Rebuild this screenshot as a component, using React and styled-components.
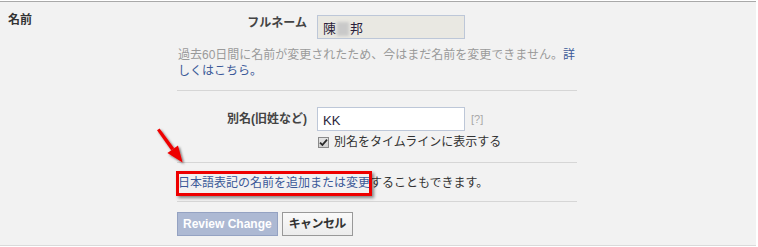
import React from "react";
import styled, { createGlobalStyle } from "styled-components";

const Global = createGlobalStyle`
  html, body { margin: 0; padding: 0; background: #ffffff; }
  * { box-sizing: border-box; }
`;

const Panel = styled.section`
  margin-top: 1px;
  width: 756px;
  height: 245px;
  background: #f2f2f2;
  border-top: 1px solid #a9a9a9;
  border-bottom: 1px solid #dadada;
  display: grid;
  grid-template-columns: 177px 400px;
  align-items: start;
  font-family: "Liberation Sans", "Noto Sans CJK JP", sans-serif;
  font-size: 12px;
  line-height: 16px;
  color: #333;
`;

const SectionTitle = styled.div`
  padding: 10px 0 0 8px;
  font-weight: bold;
  color: #333;
`;

const Content = styled.div`
  padding: 13px 0 9px;
  display: flex;
  flex-direction: column;
`;

const FieldRow = styled.div`
  display: grid;
  grid-template-columns: 130px 148px auto;
  column-gap: 10px;
  align-items: ${(p) => (p.$top ? "start" : "center")};
  margin-top: ${(p) => p.$mt || 0}px;
`;

const Label = styled.label`
  text-align: right;
  font-weight: bold;
  color: #444;
  white-space: nowrap;
`;

const TextBox = styled.div`
  height: 24px;
  border: 1px solid #bdc7d8;
  background: ${(p) => (p.$disabled ? "#e9e8e2" : "#ffffff")};
  padding: 3px 5px 0;
  display: flex;
  align-items: center;
  color: #2a1e3a;
  font-size: 13px;
  line-height: 16px;
`;

const Blur = styled.span`
  display: inline-block;
  width: 12px;
  height: 14px;
  margin: 0 1px;
  background: #c9c9c9;
  filter: blur(1.5px);
`;

const Help = styled.span`
  font-size: 11px;
  color: #a8a8a8;
  margin-left: -4px;
`;

const Note = styled.p`
  margin: 8px 0 0;
  padding-left: 1px;
  color: #9a9a9a;
`;

const Link = styled.a`
  color: #3b5998;
  text-decoration: none;
`;

const Divider = styled.hr`
  margin: ${(p) => p.$mt}px 0 0;
  border: 0;
  height: 1px;
  background: #d6d6d6;
`;

const CheckLine = styled.label`
  margin: 3px 0 0 140px;
  display: flex;
  align-items: center;
  gap: 5px;
  color: #333;
`;

const CheckBox = styled.span`
  width: 11px;
  height: 11px;
  margin-left: 1px;
  border: 1px solid #8a8a8a;
  background: linear-gradient(#e4e4e4, #d2d2d2);
  display: flex;
  align-items: center;
  justify-content: center;
`;

const LinkLine = styled.div`
  position: relative;
  margin-top: 12px;
  padding-left: 1px;
  color: #333;
`;

const Highlight = styled.span`
  position: absolute;
  left: -1px;
  top: -4px;
  width: 196px;
  height: 25px;
  border: 3px solid #ee0000;
  box-shadow: 2px 2px 3px rgba(0, 0, 0, 0.45);
  pointer-events: none;
`;

const Arrow = styled.svg`
  position: absolute;
  left: -22px;
  top: -49px;
  overflow: visible;
`;

const Buttons = styled.div`
  margin-top: 10px;
  display: flex;
  gap: 4px;
`;

const Button = styled.button`
  height: 24px;
  padding: 0 ${(p) => (p.$primary ? 5 : 6)}px;
  font-family: "Liberation Sans", "Noto Sans CJK JP", sans-serif;
  font-size: 12px;
  font-weight: bold;
  line-height: 16px;
  letter-spacing: ${(p) => (p.$primary ? "0" : "-0.6px")};
  border: 1px solid ${(p) => (p.$primary ? "#94a2c2" : "#999999")};
  background: ${(p) =>
    p.$primary ? "#adb9d3" : "linear-gradient(#fafafa, #ececec)"};
  color: ${(p) => (p.$primary ? "#ffffff" : "#333333")};
  border-radius: 0;
`;

export default function App() {
  return (
    <>
      <Global />
      <Panel>
        <SectionTitle>名前</SectionTitle>
        <Content>
          <FieldRow $top>
            <Label>フルネーム</Label>
            <TextBox $disabled>
              陳<Blur />邦
            </TextBox>
          </FieldRow>
          <Note>
            過去60日間に名前が変更されたため、今はまだ名前を変更できません。
            <Link href="#">詳しくはこちら。</Link>
          </Note>
          <Divider $mt={11} />
          <FieldRow $mt={16}>
            <Label>別名(旧姓など)</Label>
            <TextBox>KK</TextBox>
            <Help>[?]</Help>
          </FieldRow>
          <CheckLine>
            <CheckBox>
              <svg width="9" height="9" viewBox="0 0 9 9">
                <path
                  d="M1 4.6 L3.4 7 L8 1.6"
                  fill="none"
                  stroke="#2b2b2b"
                  strokeWidth="1.8"
                />
              </svg>
            </CheckBox>
            別名をタイムラインに表示する
          </CheckLine>
          <Divider $mt={12} />
          <LinkLine>
            <Link href="#">日本語表記の名前を追加または変更</Link>
            することもできます。
            <Highlight />
            <Arrow width="32" height="40" viewBox="0 0 32 40">
              <defs>
                <filter id="sh" x="-50%" y="-50%" width="200%" height="200%">
                  <feDropShadow dx="1.5" dy="1.5" stdDeviation="1.2" floodColor="#000" floodOpacity="0.55" />
                </filter>
              </defs>
              <g filter="url(#sh)" fill="#ee0000" stroke="none">
                <path d="M2 4.2 L4.6 2.4 L19.2 22.3 L16.2 24.3 Z" />
                <path d="M12.4 27 L23 19.4 L27.6 36.4 Z" />
              </g>
            </Arrow>
          </LinkLine>
          <Divider $mt={10} />
          <Buttons>
            <Button $primary>Review Change</Button>
            <Button>キャンセル</Button>
          </Buttons>
        </Content>
      </Panel>
    </>
  );
}
